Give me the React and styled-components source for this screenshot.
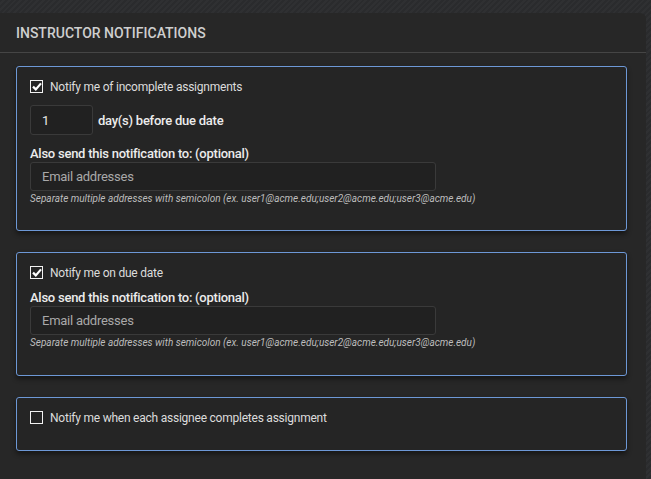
import React from 'react';
import styled, { createGlobalStyle } from 'styled-components';

const GlobalStyle = createGlobalStyle`
  html, body {
    margin: 0;
    padding: 0;
    height: 100%;
  }
  body {
    font-family: Roboto, "Liberation Sans", sans-serif;
    background: repeating-linear-gradient(
      135deg,
      #2a2b2d 0px,
      #2a2b2d 2px,
      #2f3032 2px,
      #2f3032 4px
    );
  }
  #root {
    min-height: 100%;
  }
`;

const Panel = styled.section`
  margin: 13px 5px 0 0;
  min-height: 466px;
  background: #272727;
  border-top-right-radius: 6px;
`;

const Header = styled.h2`
  margin: 0;
  padding: 0 16px;
  height: 39px;
  display: flex;
  align-items: center;
  font-size: 14px;
  font-weight: 500;
  color: #cfcfcf;
  text-transform: uppercase;
  border-bottom: 1px solid #454545;
`;

const Body = styled.div`
  display: flex;
  flex-direction: column;
  gap: 21px;
  padding: 13px 19px 0 16px;
`;

const Card = styled.div`
  border: 1px solid #6d98d6;
  border-radius: 3px;
  background: #252525;
  box-shadow: 0 3px 5px rgba(0, 0, 0, 0.45);
  padding: 13px 13px ${p => p.$bottom}px 13px;
  display: flex;
  flex-direction: column;
`;

const CheckRow = styled.label`
  display: flex;
  align-items: center;
  gap: 7px;
  font-size: 12px;
  letter-spacing: -0.23px;
  color: #dcdcdc;
  height: 13px;
`;

const Box = styled.span`
  width: 11px;
  height: 11px;
  border: 1px solid #f2f2f2;
  display: flex;
  align-items: center;
  justify-content: center;
  flex-shrink: 0;
`;

const DaysRow = styled.div`
  display: flex;
  align-items: center;
  gap: 5px;
  margin-top: 12px;
`;

const NumberInput = styled.div`
  width: 50px;
  height: 28px;
  border: 1px solid #3a3a3a;
  border-radius: 3px;
  background: #212121;
  padding-left: 11px;
  display: flex;
  align-items: center;
  font-size: 13px;
  color: #e8e8e8;
`;

const Label = styled.div`
  font-size: 13px;
  font-weight: 500;
  letter-spacing: -0.25px;
  color: #ececec;
  margin-top: ${p => p.$top}px;
  line-height: 15px;
`;

const EmailInput = styled.div`
  width: 393px;
  height: 27px;
  margin-top: 1px;
  border: 1px solid #3a3a3a;
  border-radius: 3px;
  background: #212121;
  padding-left: 11px;
  display: flex;
  align-items: center;
  font-size: 13px;
  letter-spacing: -0.25px;
  color: #a9a9a9;
`;

const Hint = styled.div`
  margin-top: 2px;
  font-size: 10px;
  font-style: italic;
  letter-spacing: 0px;
  color: #bdbdbd;
  line-height: 11px;
`;

function Checkbox({ checked, label }) {
  return (
    <CheckRow>
      <Box>
        {checked && (
          <svg width="10" height="9" viewBox="0 0 10 9">
            <path d="M1 4.6 L3.8 7.4 L9 1.4" fill="none" stroke="#fff" strokeWidth="2.2" />
          </svg>
        )}
      </Box>
      {label}
    </CheckRow>
  );
}

function EmailBlock({ top }) {
  return (
    <>
      <Label $top={top}>Also send this notification to: (optional)</Label>
      <EmailInput>Email addresses</EmailInput>
      <Hint>Separate multiple addresses with semicolon (ex. user1@acme.edu;user2@acme.edu;user3@acme.edu)</Hint>
    </>
  );
}

export default function App() {
  return (
    <>
      <GlobalStyle />
      <Panel>
        <Header>Instructor Notifications</Header>
        <Body>
          <Card $bottom={26}>
            <Checkbox checked label="Notify me of incomplete assignments" />
            <DaysRow>
              <NumberInput>1</NumberInput>
              <Label $top={0}>day(s) before due date</Label>
            </DaysRow>
            <EmailBlock top={11} />
          </Card>
          <Card $bottom={27}>
            <Checkbox checked label="Notify me on due date" />
            <EmailBlock top={11} />
          </Card>
          <Card $bottom={26}>
            <Checkbox label="Notify me when each assignee completes assignment" />
          </Card>
        </Body>
      </Panel>
    </>
  );
}
